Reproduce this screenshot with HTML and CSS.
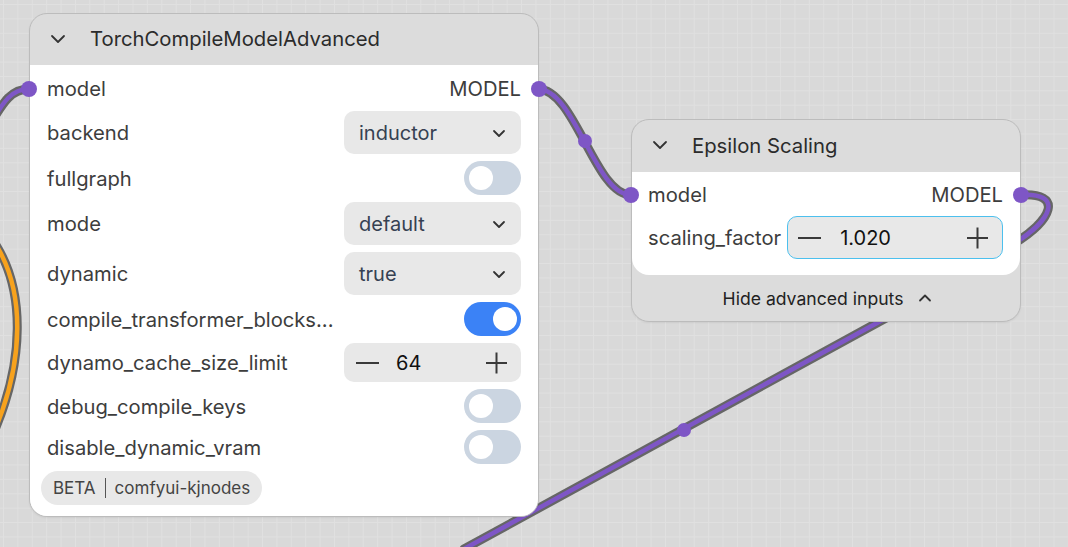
FILE: index.html
```html
<!DOCTYPE html>
<html lang="en">
<head>
    <meta charset="UTF-8">
    <title>Node Graph</title>
    <link rel="stylesheet" href="styles.css">
</head>
<body>
    <div class="canvas">
        <!-- links are drawn under the nodes -->
        <svg class="links" width="1068" height="547" viewBox="0 0 1068 547">
            <g class="link-outline">
                <path d="M-12,128 C4,100 12,89 29,89"/>
                <path d="M538,89 C575,89 595,195 631,195"/>
                <path d="M1020,195 C1064,192 1054,220 1010,246 L950,283 L464,549"/>
            </g>
            <path class="link-orange-outline" d="M-6,242 C26,290 24,362 -6,432"/>
            <path class="link-orange" d="M-6,242 C26,290 24,362 -6,432"/>
            <g class="link-model">
                <path d="M-12,128 C4,100 12,89 29,89"/>
                <path d="M538,89 C575,89 595,195 631,195"/>
                <path d="M1020,195 C1064,192 1054,220 1010,246 L950,283 L464,549"/>
            </g>
            <circle class="link-dot" cx="585" cy="141" r="7"/>
            <circle class="link-dot" cx="684" cy="430" r="7"/>
        </svg>

        <div class="node node-compile">
            <div class="node-header">
                <svg class="chevron" width="16" height="16" viewBox="0 0 16 16"><path d="M2 5l6 6 6-6"/></svg>
                <span class="node-title">TorchCompileModelAdvanced</span>
            </div>
            <div class="node-body">
                <div class="slot-row">
                    <span class="slot slot-in"></span>
                    <span class="label">model</span>
                    <span class="output">MODEL</span>
                    <span class="slot slot-out"></span>
                </div>
                <div class="widget-row">
                    <span class="label">backend</span>
                    <div class="combo">inductor
                        <svg width="14" height="14" viewBox="0 0 14 14"><path d="M2 5l5 5 5-5"/></svg>
                    </div>
                </div>
                <div class="widget-row">
                    <span class="label">fullgraph</span>
                    <span class="toggle"></span>
                </div>
                <div class="widget-row">
                    <span class="label">mode</span>
                    <div class="combo">default
                        <svg width="14" height="14" viewBox="0 0 14 14"><path d="M2 5l5 5 5-5"/></svg>
                    </div>
                </div>
                <div class="widget-row">
                    <span class="label">dynamic</span>
                    <div class="combo">true
                        <svg width="14" height="14" viewBox="0 0 14 14"><path d="M2 5l5 5 5-5"/></svg>
                    </div>
                </div>
                <div class="widget-row">
                    <span class="label">compile_transformer_blocks...</span>
                    <span class="toggle on"></span>
                </div>
                <div class="widget-row">
                    <span class="label">dynamo_cache_size_limit</span>
                    <div class="number">
                        <svg class="step" width="24" height="24" viewBox="0 0 24 24"><path d="M0 12h23"/></svg>
                        <span class="value">64</span>
                        <svg class="step" width="24" height="24" viewBox="0 0 24 24"><path d="M1 12h21M11.5 1.5v21"/></svg>
                    </div>
                </div>
                <div class="widget-row">
                    <span class="label">debug_compile_keys</span>
                    <span class="toggle"></span>
                </div>
                <div class="widget-row">
                    <span class="label">disable_dynamic_vram</span>
                    <span class="toggle"></span>
                </div>
                <div class="badge">
                    <span>BETA</span>
                    <span class="badge-sep"></span>
                    <span>comfyui-kjnodes</span>
                </div>
            </div>
        </div>

        <div class="node node-epsilon">
            <div class="node-header">
                <svg class="chevron" width="16" height="16" viewBox="0 0 16 16"><path d="M2 5l6 6 6-6"/></svg>
                <span class="node-title">Epsilon Scaling</span>
            </div>
            <div class="node-body">
                <div class="slot-row">
                    <span class="slot slot-in"></span>
                    <span class="label">model</span>
                    <span class="output">MODEL</span>
                    <span class="slot slot-out"></span>
                </div>
                <div class="widget-row">
                    <span class="label">scaling_factor</span>
                    <div class="number focused">
                        <svg class="step" width="24" height="24" viewBox="0 0 24 24"><path d="M0 12h23"/></svg>
                        <span class="value">1.020</span>
                        <svg class="step" width="24" height="24" viewBox="0 0 24 24"><path d="M1 12h21M11.5 1.5v21"/></svg>
                    </div>
                </div>
            </div>
            <div class="node-footer">
                Hide advanced inputs
                <svg width="16" height="16" viewBox="0 0 16 16"><path d="M3 10.5l5-5 5 5"/></svg>
            </div>
        </div>
    </div>
</body>
</html>
```

FILE: styles.css
```css
body {
    margin: 0;
    font-family: Inter, "Noto Sans", sans-serif;
    color: #3b3b3b;
    overflow: hidden;
}

.canvas {
    position: relative;
    width: 1068px;
    height: 547px;
    background-color: #d9d9d9;
    background-image:
        linear-gradient(to right, #e0e0e0 1px, transparent 1px),
        linear-gradient(to bottom, #e0e0e0 1px, transparent 1px);
    background-size: 14.4px 14.4px;
    background-position: 3px 4px;
    overflow: hidden;
}

/* links */
.links {
    position: absolute;
    left: 0;
    top: 0;
}

.links path {
    fill: none;
    stroke-linecap: round;
}

.link-outline path,
.link-orange-outline {
    stroke: #666666;
    stroke-width: 9;
}

.link-model path {
    stroke: #7e56c6;
    stroke-width: 4.5;
}

.link-orange {
    stroke: #f7a21d;
    stroke-width: 4.5;
}

.link-dot {
    fill: #7e56c6;
}

/* nodes */
.node {
    position: absolute;
    box-sizing: border-box;
    border: 1px solid #bcbcbc;
    border-radius: 18px;
    background-color: #dcdcdc;
    box-shadow: 0 1px 2px rgba(0, 0, 0, 0.06);
}

.node-compile {
    left: 29px;
    top: 13px;
    width: 510px;
}

.node-epsilon {
    left: 631px;
    top: 119px;
    width: 390px;
}

.node-header {
    display: flex;
    align-items: center;
    box-sizing: border-box;
    height: 51px;
    padding: 0 0 2px 20px;
    gap: 24px;
    border-radius: 17px 17px 0 0;
}

.node-epsilon .node-header {
    height: 52px;
}

.chevron path,
.combo path,
.node-footer path {
    fill: none;
    stroke: #333;
    stroke-width: 1.8;
    stroke-linecap: round;
    stroke-linejoin: round;
}

.node-title {
    font-size: 20.3px;
    color: #2b2b2b;
}

.node-body {
    display: flex;
    flex-direction: column;
    gap: 7px;
    padding: 7px 17px 11px 17px;
    background-color: #fff;
    border-radius: 0 0 17px 17px;
}

.node-epsilon .node-body {
    padding: 6px 17px 16px 16px;
    gap: 6px;
}

.label {
    font-size: 20.2px;
    color: #3d3d3d;
    white-space: nowrap;
}

.slot-row {
    position: relative;
    display: flex;
    align-items: center;
    justify-content: space-between;
    height: 32px;
}

.output {
    font-size: 20.2px;
    color: #3d3d3d;
}

.slot {
    position: absolute;
    top: 9px;
    width: 16px;
    height: 16px;
    border-radius: 50%;
    background-color: #7e56c6;
}

.slot-in {
    left: -26px;
}

.slot-out {
    right: -26px;
}

.node-epsilon .slot-in {
    left: -25px;
}

.widget-row {
    display: flex;
    align-items: center;
    justify-content: space-between;
    gap: 6px;
}

.combo {
    box-sizing: border-box;
    display: flex;
    align-items: center;
    justify-content: space-between;
    width: 177px;
    height: 43px;
    padding: 0 15px 0 15px;
    border-radius: 10px;
    background-color: #e8e8e8;
    font-size: 20px;
    color: #364152;
}

.toggle {
    position: relative;
    width: 57px;
    height: 34px;
    border-radius: 17px;
    background-color: #cbd5e1;
}

.toggle::after {
    content: "";
    position: absolute;
    left: 5px;
    top: 5px;
    width: 24px;
    height: 24px;
    border-radius: 50%;
    background-color: #fff;
}

.toggle.on {
    background-color: #3b82f6;
}

.toggle.on::after {
    left: 29px;
}

.number {
    box-sizing: border-box;
    display: flex;
    align-items: center;
    width: 177px;
    height: 39px;
    padding: 0 12px 0 12px;
    border-radius: 10px;
    background-color: #e8e8e8;
    font-size: 20px;
    color: #111;
}

.number .value {
    flex: 1;
    padding-left: 16px;
}

.step path {
    fill: none;
    stroke: #3a3a3a;
    stroke-width: 2;
}

.number.focused {
    flex: 1;
    height: 43px;
    border: 1px solid #4cc0ee;
    padding: 0 12px 0 10px;
}

.number.focused .value {
    padding-left: 18px;
}

.badge {
    display: flex;
    align-items: center;
    align-self: flex-start;
    gap: 9px;
    height: 34px;
    margin-left: -6px;
    padding: 0 12px;
    border-radius: 17px;
    background-color: #e8e8e8;
    font-size: 17px;
    color: #444;
}

.badge-sep {
    width: 1px;
    height: 20px;
    background-color: #555;
}

.node-footer {
    display: flex;
    align-items: center;
    justify-content: center;
    gap: 14px;
    height: 46px;
    font-size: 17.6px;
    color: #222;
    padding-left: 4px;
}
```
